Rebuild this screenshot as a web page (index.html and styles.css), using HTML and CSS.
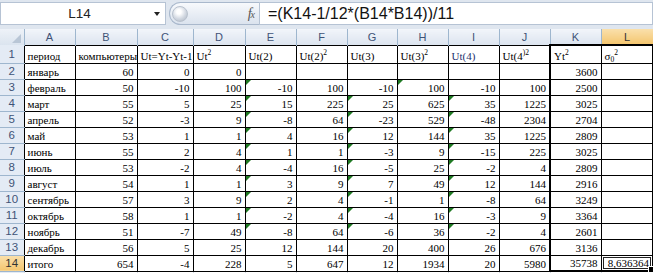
FILE: index.html
```html
<!DOCTYPE html>
<html lang="ru">
<head>
<meta charset="utf-8">
<title>Excel</title>
<link rel="stylesheet" href="styles.css">
</head>
<body>
<div class="fbar">
  <div class="namebox"><span class="ref">L14</span><span class="dd"></span></div>
  <div class="pill"><span class="knob"></span><span class="fx"><i>f</i><i class="x">x</i></span></div>
  <div class="formula">=(K14-1/12*(B14*B14))/11</div>
</div>
<table class="sheet">
  <colgroup>
    <col class="w24"><col class="w51"><col class="w62"><col class="w56"><col class="w52"><col class="w51"><col class="w51"><col class="w50"><col class="w51"><col class="w51"><col class="w51"><col class="w51"><col class="w52">
  </colgroup>
  <tr class="h">
    <th class="corner"></th><th class="ch">A</th><th class="ch">B</th><th class="ch">C</th><th class="ch">D</th><th class="ch">E</th><th class="ch">F</th><th class="ch">G</th><th class="ch">H</th><th class="ch">I</th><th class="ch">J</th><th class="ch">K</th><th class="ch sel">L</th>
  </tr>
  <tr class="r1">
    <th class="rh">1</th><td class="t">период</td><td class="t">компьютеры</td><td class="t">Ut=Yt-Yt-1</td><td class="t">Ut<sup>2</sup></td><td class="t">Ut(2)</td><td class="t">Ut(2)<sup>2</sup></td><td class="t">Ut(3)</td><td class="t">Ut(3)<sup>2</sup></td><td class="t blue">Ut(4)</td><td class="t">Ut(4<sup>)2</sup></td><td class="t k top">Yt<sup>2</sup></td><td class="t l top">σ<sub>0</sub><sup>2</sup></td>
  </tr>
  <tr class="r">
    <th class="rh">2</th><td class="t">январь</td><td>60</td><td>0</td><td>0</td><td></td><td></td><td></td><td></td><td></td><td></td><td class="k">3600</td><td class="l"></td>
  </tr>
  <tr class="r">
    <th class="rh">3</th><td class="t">февраль</td><td>50</td><td>-10</td><td>100</td><td class="g">-10</td><td>100</td><td>-10</td><td class="g">100</td><td>-10</td><td>100</td><td class="k">2500</td><td class="l"></td>
  </tr>
  <tr class="r">
    <th class="rh">4</th><td class="t">март</td><td>55</td><td>5</td><td>25</td><td class="g">15</td><td>225</td><td class="g">25</td><td>625</td><td class="g">35</td><td>1225</td><td class="k">3025</td><td class="l"></td>
  </tr>
  <tr class="r">
    <th class="rh">5</th><td class="t">апрель</td><td>52</td><td>-3</td><td>9</td><td class="g">-8</td><td>64</td><td class="g">-23</td><td>529</td><td class="g">-48</td><td>2304</td><td class="k">2704</td><td class="l"></td>
  </tr>
  <tr class="r">
    <th class="rh">6</th><td class="t">май</td><td>53</td><td>1</td><td>1</td><td class="g">4</td><td>16</td><td class="g">12</td><td>144</td><td class="g">35</td><td>1225</td><td class="k">2809</td><td class="l"></td>
  </tr>
  <tr class="r">
    <th class="rh">7</th><td class="t">июнь</td><td>55</td><td>2</td><td>4</td><td class="g">1</td><td>1</td><td class="g">-3</td><td>9</td><td class="g">-15</td><td>225</td><td class="k">3025</td><td class="l"></td>
  </tr>
  <tr class="r">
    <th class="rh">8</th><td class="t">июль</td><td>53</td><td>-2</td><td>4</td><td class="g">-4</td><td>16</td><td class="g">-5</td><td>25</td><td class="g">-2</td><td>4</td><td class="k">2809</td><td class="l"></td>
  </tr>
  <tr class="r">
    <th class="rh">9</th><td class="t">август</td><td>54</td><td>1</td><td>1</td><td class="g">3</td><td>9</td><td class="g">7</td><td>49</td><td class="g">12</td><td>144</td><td class="k">2916</td><td class="l"></td>
  </tr>
  <tr class="r">
    <th class="rh">10</th><td class="t">сентябрь</td><td>57</td><td>3</td><td>9</td><td class="g">2</td><td>4</td><td class="g">-1</td><td>1</td><td class="g">-8</td><td>64</td><td class="k">3249</td><td class="l"></td>
  </tr>
  <tr class="r">
    <th class="rh">11</th><td class="t">октябрь</td><td>58</td><td>1</td><td>1</td><td class="g">-2</td><td>4</td><td class="g">-4</td><td>16</td><td class="g">-3</td><td>9</td><td class="k">3364</td><td class="l"></td>
  </tr>
  <tr class="r">
    <th class="rh">12</th><td class="t">ноябрь</td><td>51</td><td>-7</td><td>49</td><td class="g">-8</td><td>64</td><td class="g">-6</td><td>36</td><td class="g">-2</td><td>4</td><td class="k">2601</td><td class="l"></td>
  </tr>
  <tr class="r">
    <th class="rh">13</th><td class="t">декабрь</td><td>56</td><td>5</td><td>25</td><td>12</td><td>144</td><td>20</td><td>400</td><td>26</td><td>676</td><td class="k">3136</td><td class="l"></td>
  </tr>
  <tr class="r">
    <th class="rh sel">14</th><td class="t">итого</td><td>654</td><td>-4</td><td>228</td><td>5</td><td>647</td><td>12</td><td>1934</td><td>20</td><td>5980</td><td class="k bot">35738</td><td class="l bot cur">8,636364</td>
  </tr>
  <tr class="r15">
    <th class="rh"></th><td class="e"></td><td class="e"></td><td class="e"></td><td class="e"></td><td class="e"></td><td class="e"></td><td class="e"></td><td class="e"></td><td class="e"></td><td class="e"></td><td class="e"></td><td class="e"></td>
  </tr>
</table>
</body>
</html>
```
FILE: styles.css
```css
* { box-sizing: border-box; }
body {
  margin: 0;
  width: 653px;
  height: 273px;
  overflow: hidden;
  background: #fff;
  font-family: "Liberation Sans", Arial, sans-serif;
}

/* formula bar */
.fbar {
  display: flex;
  height: 29px;
  padding: 2px 0 4px;
  background: #dfe6ef;
}
.namebox {
  width: 166px;
  background: #fff;
  border: 1px solid #b6c3d4;
  display: flex;
  align-items: center;
}
.namebox .ref {
  flex: 1;
  text-align: center;
  font-size: 13.5px;
  color: #222;
  padding-left: 4px;
}
.namebox .dd {
  width: 0;
  height: 0;
  border-top: 4px solid #222;
  border-left: 3.5px solid transparent;
  border-right: 3.5px solid transparent;
  margin-right: 5px;
}
.pill {
  width: 90px;
  margin-left: 3px;
  border-radius: 12px 0 0 12px;
  background: linear-gradient(#f7f9fc, #dbe3ee);
  border: 1px solid #a9b8cc;
  border-right: none;
  display: flex;
  align-items: center;
  justify-content: space-between;
  padding: 0 5px 0 2px;
}
.knob {
  width: 16px;
  height: 16px;
  border-radius: 50%;
  background: radial-gradient(circle at 42% 35%, #ffffff 0 18%, #d3d9e2 55%, #a9b2bf 100%);
  border: 1px solid #b8c1cd;
}
.fx {
  font-family: "Liberation Serif", "Times New Roman", serif;
  font-size: 14px;
  color: #555;
  letter-spacing: -1px;
}
.fx .x { font-size: 10px; }
.formula {
  flex: 1;
  background: #fff;
  border: 1px solid #b6c3d4;
  font-size: 16px;
  color: #111;
  padding-left: 8px;
  display: flex;
  align-items: center;
}

/* sheet */
.sheet {
  border-collapse: collapse;
  table-layout: fixed;
  width: 653px;
  font-family: "Liberation Serif", "Times New Roman", serif;
  font-size: 11px;
  color: #000;
}
.w24 { width: 24px; }
.w50 { width: 50px; }
.w51 { width: 51px; }
.w52 { width: 52px; }
.w56 { width: 56px; }
.w62 { width: 62px; }

th {
  font-family: "Liberation Sans", Arial, sans-serif;
  font-weight: normal;
  color: #3f5377;
  padding: 0;
}
.h th { height: 16px; }
.corner {
  position: relative;
  background: linear-gradient(#eef2f8, #dbe4ef);
  border-right: 1px solid #9eb6ce;
}
.corner::after {
  content: "";
  position: absolute;
  right: 3px;
  bottom: 2px;
  border-bottom: 9px solid #b9c6d6;
  border-left: 9px solid transparent;
}
.ch {
  font-size: 11px;
  background: linear-gradient(#f2f5fa, #dce4ef);
  border-right: 1px solid #9eb6ce;
}
.rh {
  font-size: 11.5px;
  background: #e4ebf5;
  border-bottom: 1px solid #9eb6ce;
  text-align: center;
}
th.sel {
  background: linear-gradient(#fae0ac, #f4c670);
  color: #333;
}

td {
  border: 1px solid #000;
  padding: 0 3px 0 2px;
  text-align: right;
  vertical-align: bottom;
  line-height: 14px;
  white-space: nowrap;
  overflow: hidden;
  position: relative;
}
.r1 td { height: 18px; }
.r td { height: 16px; }
.r15 td, .r15 th { height: 16px; }
td.t { text-align: left; padding-left: 3px; }
td.blue { color: #1c2f6e; }
td.k { border-left: 2px solid #000; }
td.l { border-right: 2px solid #000; }
td.top { border-top: 2px solid #000; }
td.bot { border-bottom: 2px solid #000; }
td.cur {
  box-shadow: inset 0 0 0 1px #fff, inset 0 0 0 2px #222;
  overflow: visible;
}
td.cur::after {
  content: "";
  position: absolute;
  right: -3px;
  bottom: -3px;
  width: 5px;
  height: 5px;
  background: #000;
  border: 1px solid #fff;
}
td.g::before {
  content: "";
  position: absolute;
  left: 0;
  top: 0;
  border-top: 5px solid #1f7a23;
  border-right: 5px solid transparent;
}
td.e {
  border: 1px solid #d4dbe6;
  border-top: none;
}

sup {
  font-size: 7.5px;
  vertical-align: 5px;
  line-height: 0;
}
sub {
  font-size: 7.5px;
  vertical-align: -2px;
  line-height: 0;
}
```
